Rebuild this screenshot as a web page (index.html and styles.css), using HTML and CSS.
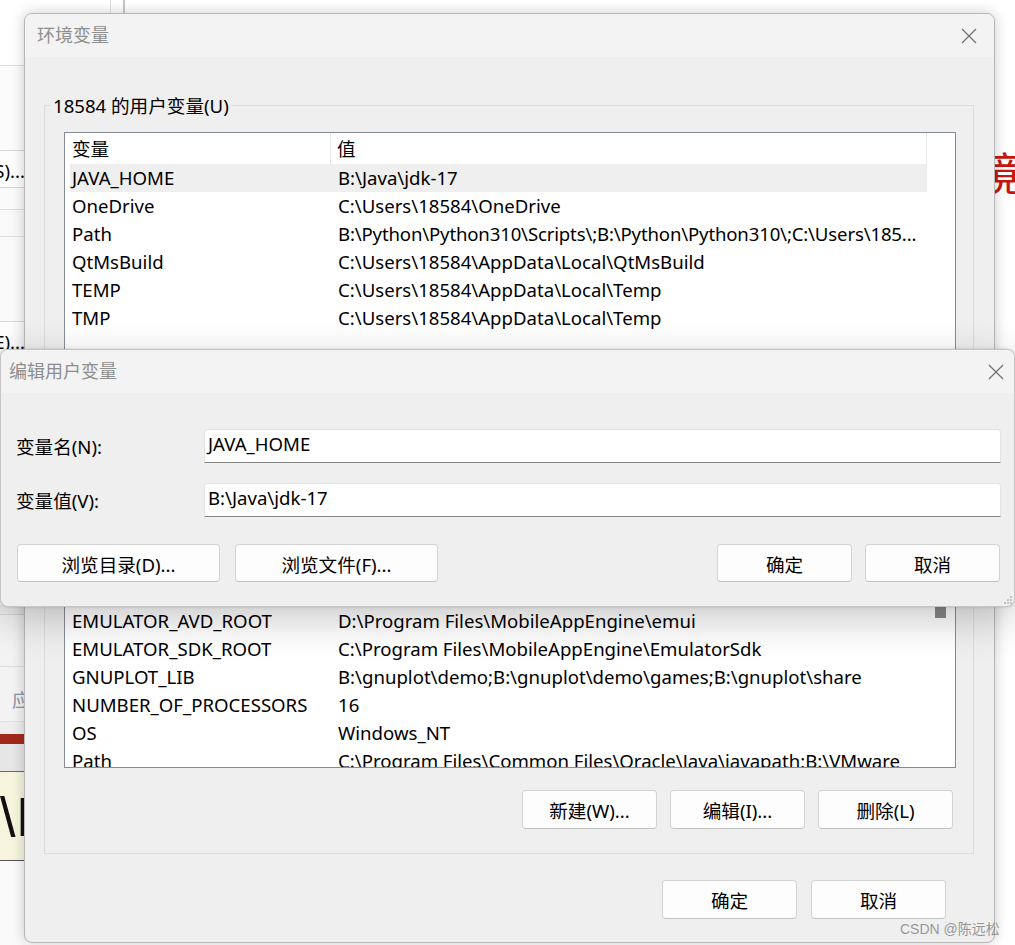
FILE: index.html
```html
<!DOCTYPE html>
<html lang="zh-CN">
<head>
<meta charset="utf-8">
<title>环境变量</title>
<link rel="stylesheet" href="styles.css">
</head>
<body>
<div class="desktop">
  <div class="bgwin">
    <div class="bg-top"></div>
    <div class="bg-a1"></div>
    <div class="bg-btn bg-b1">设置(S)...</div>
    <div class="bg-a2"></div>
    <div class="bg-strip"></div>
    <div class="bg-a3"></div>
    <div class="bg-btn bg-b2">设置(E)...</div>
    <div class="bg-hidden"></div>
    <div class="bg-a4"></div>
    <div class="bg-a5"></div>
    <div class="bg-apply">应用(A)</div>
    <div class="bg-gap"></div>
    <div class="bg-red"></div>
    <div class="bg-grey"></div>
    <div class="bg-note">\I</div>
    <div class="bg-bottom"></div>
  </div>
  <div class="bgedge"></div>
  <div class="article-char">境</div>

  <div class="win main">
    <div class="titlebar">
      <span class="title">环境变量</span>
      <svg class="close" width="16" height="16" viewBox="0 0 16 16"><path d="M1 1L15 15M15 1L1 15" stroke="#6f6f6f" stroke-width="1.2" fill="none"/></svg>
    </div>
    <div class="main-body">
      <div class="group g-user">
        <span class="legend">18584 的用户变量(U)</span>
        <div class="list list-user">
          <div class="list-main">
            <div class="list-head"><div class="hc hc-name">变量</div><div class="hc hc-val">值</div></div>
            <div class="rows">
              <div class="row sel"><span class="c-name">JAVA_HOME</span><span class="c-val">B:\Java\jdk-17</span></div>
              <div class="row"><span class="c-name">OneDrive</span><span class="c-val">C:\Users\18584\OneDrive</span></div>
              <div class="row"><span class="c-name">Path</span><span class="c-val tight">B:\Python\Python310\Scripts\;B:\Python\Python310\;C:\Users\185...</span></div>
              <div class="row"><span class="c-name">QtMsBuild</span><span class="c-val">C:\Users\18584\AppData\Local\QtMsBuild</span></div>
              <div class="row"><span class="c-name">TEMP</span><span class="c-val">C:\Users\18584\AppData\Local\Temp</span></div>
              <div class="row"><span class="c-name">TMP</span><span class="c-val">C:\Users\18584\AppData\Local\Temp</span></div>
            </div>
          </div>
          <div class="vscroll"></div>
        </div>
        <div class="btnrow covered">
          <button class="btn">新建(N)...</button>
          <button class="btn">编辑(E)...</button>
          <button class="btn">删除(D)</button>
        </div>
      </div>

      <div class="group g-sys">
        <span class="legend covered">系统变量(S)</span>
        <div class="list list-sys">
          <div class="list-main">
            <div class="list-head covered"><div class="hc hc-name">变量</div><div class="hc hc-val">值</div></div>
            <div class="rows">
              <div class="row covered"><span class="c-name">ComSpec</span><span class="c-val">C:\WINDOWS\system32\cmd.exe</span></div>
              <div class="row covered"><span class="c-name">DriverData</span><span class="c-val">C:\Windows\System32\Drivers\DriverData</span></div>
              <div class="row"><span class="c-name">EMULATOR_AVD_ROOT</span><span class="c-val">D:\Program Files\MobileAppEngine\emui</span></div>
              <div class="row"><span class="c-name">EMULATOR_SDK_ROOT</span><span class="c-val">C:\Program Files\MobileAppEngine\EmulatorSdk</span></div>
              <div class="row"><span class="c-name">GNUPLOT_LIB</span><span class="c-val">B:\gnuplot\demo;B:\gnuplot\demo\games;B:\gnuplot\share</span></div>
              <div class="row"><span class="c-name">NUMBER_OF_PROCESSORS</span><span class="c-val">16</span></div>
              <div class="row"><span class="c-name">OS</span><span class="c-val">Windows_NT</span></div>
              <div class="row"><span class="c-name">Path</span><span class="c-val">C:\Program Files\Common Files\Oracle\Java\javapath;B:\VMware</span></div>
            </div>
          </div>
          <div class="vscroll"><div class="thumb"></div></div>
        </div>
        <div class="btnrow">
          <button class="btn">新建(W)...</button>
          <button class="btn">编辑(I)...</button>
          <button class="btn">删除(L)</button>
        </div>
      </div>

      <div class="footer">
        <button class="btn">确定</button>
        <button class="btn">取消</button>
      </div>
    </div>
  </div>

  <div class="win edit">
    <div class="titlebar">
      <span class="title">编辑用户变量</span>
      <svg class="close" width="16" height="16" viewBox="0 0 16 16"><path d="M1 1L15 15M15 1L1 15" stroke="#6f6f6f" stroke-width="1.2" fill="none"/></svg>
    </div>
    <div class="edit-body">
      <div class="field">
        <label class="flabel">变量名(N):</label>
        <div class="input">JAVA_HOME</div>
      </div>
      <div class="field">
        <label class="flabel">变量值(V):</label>
        <div class="input">B:\Java\jdk-17</div>
      </div>
      <div class="edit-btns">
        <div class="btn-group">
          <button class="btn btn-wide">浏览目录(D)...</button>
          <button class="btn btn-wide">浏览文件(F)...</button>
        </div>
        <div class="btn-group">
          <button class="btn">确定</button>
          <button class="btn">取消</button>
        </div>
      </div>
    </div>
    <svg class="grip" width="10" height="10" viewBox="0 0 10 10"><g fill="#c4c4c4"><rect x="7" y="1" width="2" height="2"/><rect x="4" y="4" width="2" height="2"/><rect x="7" y="4" width="2" height="2"/><rect x="1" y="7" width="2" height="2"/><rect x="4" y="7" width="2" height="2"/><rect x="7" y="7" width="2" height="2"/></g></svg>
  </div>

  <div class="watermark">CSDN @陈远松</div>
</div>
</body>
</html>
```

FILE: styles.css
```css
* { box-sizing: border-box; }
html, body { margin: 0; padding: 0; }
body {
  width: 1015px;
  height: 945px;
  overflow: hidden;
  background: #ffffff;
  font-family: "Noto Sans", "Noto Sans CJK SC", sans-serif;
  font-size: 18.6px;
  color: #000;
}
.desktop { position: relative; width: 1015px; height: 945px; overflow: hidden; }
.covered { visibility: hidden; }

/* background window on the left */
.bgwin {
  position: absolute;
  left: 0; top: 0;
  width: 26px; height: 945px;
  display: flex; flex-direction: column;
  overflow: hidden;
  background: #fafafa;
}
.bg-top { height: 66px; background: #ffffff; border-bottom: 1px solid #dedede; flex: none; }
.bg-a1 { height: 84px; flex: none; background: #fbfbfb; }
.bg-btn {
  flex: none; height: 38px;
  border-top: 1px solid #d6d6d6; border-bottom: 1px solid #d6d6d6;
  display: flex; align-items: center; justify-content: flex-end;
  white-space: nowrap; padding-right: 1px; background: #fdfdfd;
}
.bg-a2 { height: 22px; flex: none; border-bottom: 1px solid #dedede; }
.bg-strip { height: 27px; flex: none; border-bottom: 1px solid #dedede; background: #f9f9f9; }
.bg-a3 { height: 84px; flex: none; }
.bg-b2 { height: 38px; }
.bg-hidden { height: 246px; flex: none; }
.bg-a4 { height: 10px; flex: none; background: #ededed; border-bottom: 1px solid #d8d8d8; }
.bg-a5 { height: 52px; flex: none; background: #f3f3f3; border-bottom: 1px solid #dcdcdc; }
.bg-apply {
  height: 55px; flex: none; background: #f3f3f3;
  color: #8a96a8; padding-left: 12px; padding-top: 21px; white-space: nowrap;
  border-bottom: 1px solid #e2e2e2; line-height: 24px;
}
.bg-gap { height: 12px; flex: none; background: #eeeeee; }
.bg-red { height: 10px; flex: none; background: #a3281c; }
.bg-grey { height: 28px; flex: none; background: #e6e6e6; border-bottom: 1px solid #6a6a6a; }
.bg-note {
  height: 89px; flex: none; background: #f7f5dd; border-bottom: 1px solid #555;
  font-family: "Liberation Sans", sans-serif; font-size: 56px; line-height: 89px;
  font-weight: 300; white-space: nowrap; color: #111; padding-left: 0;
}
.bg-bottom { flex: 1; background: #fafafa; }
.bgedge {
  position: absolute; left: 110px; top: 0; width: 15px; height: 16px;
  border-left: 1px solid #e2e2e2; border-right: 2px solid #c6c6c6;
}
.article-char {
  position: absolute; left: 976px; top: 148px;
  font-family: "Noto Sans CJK SC", sans-serif;
  font-size: 45px; line-height: 48px; color: #c8160e;
}

/* windows */
.win {
  position: absolute;
  background: #efefef;
  border-radius: 8px;
  overflow: hidden;
  display: flex; flex-direction: column;
}
.titlebar {
  flex: none; height: 43px; background: #f3f3f3;
  display: flex; align-items: center; justify-content: space-between;
}
.title { color: #8e8e8e; font-size: 18px; margin-bottom: 4px; }
.close { display: block; }

.main {
  left: 24px; top: 13px; width: 971px; height: 930px;
  border: 1px solid #b6b6b6;
  box-shadow: 0 0 14px rgba(0,0,0,0.20);
}
.main .titlebar { padding: 0 17px 0 12px; }
.main-body { flex: 1; padding: 48px 20px 0 19px; }

.group {
  position: relative;
  border: 1px solid #dcdcdc;
  padding: 26px 17px 24px 19px;
}
.legend {
  position: absolute; left: 6px; top: -12px;
  padding: 0 2px; line-height: 24px;
  background: #efefef; white-space: nowrap;
}
.g-sys { margin-top: 38px; }

.list {
  display: flex;
  border: 1px solid #868c96;
  background: #fff;
  overflow: hidden;
}
.list-user { height: 238px; }
.list-sys { height: 249px; }
.list-main { width: 862px; flex: none; display: flex; flex-direction: column; }
.list-head { height: 31px; display: flex; flex: none; border-right: 1px solid #e6e6e6; }
.hc { display: flex; align-items: center; white-space: nowrap; padding-bottom: 2px; }
.hc-name { width: 266px; padding-left: 7px; border-right: 1px solid #e6e6e6; }
.hc-val { flex: 1; padding-left: 6px; }
.rows { padding-left: 5px; }
.row { height: 28px; display: flex; align-items: center; white-space: nowrap; overflow: hidden; padding-bottom: 2px; }
.row.sel { background: #efefef; }
.c-name { width: 268px; padding-left: 2px; flex: none; }
.c-val { flex: 1; }
.c-val.tight { letter-spacing: -0.16px; }
.vscroll { flex: 1; }
.thumb { margin-top: 78px; margin-left: 8px; width: 11px; height: 20px; background: #898989; }

.btnrow {
  display: flex; justify-content: flex-end; gap: 13px;
  margin-top: 22px; padding-right: 3px;
}
.g-user .btnrow { margin-top: 20px; }

.btn {
  font: inherit; color: #000;
  width: 135px; height: 39px;
  background: #fdfdfd;
  border: 1px solid #d3d3d3;
  border-bottom-color: #c2c2c2;
  border-radius: 4px;
  padding: 0;
  display: flex; align-items: center; justify-content: center;
  white-space: nowrap;
}
.footer {
  display: flex; justify-content: flex-end; gap: 14px;
  margin-top: 26px; padding-right: 28px;
}

/* edit dialog */
.edit {
  left: 0; top: 349px; width: 1015px; height: 258px;
  border: 1px solid #c6c6c6;
  box-shadow: 0 12px 40px rgba(0,0,0,0.22), 0 0 3px rgba(0,0,0,0.18);
}
.edit .titlebar { padding: 0 10px 0 8px; }
.edit-body { flex: 1; padding: 36px 13px 0 15px; display: flex; flex-direction: column; }
.field { display: flex; align-items: center; height: 34px; }
.field + .field { margin-top: 20px; }
.flabel { width: 188px; flex: none; white-space: nowrap; padding-bottom: 2px; }
.input {
  flex: 1; height: 34px;
  background: #fff;
  border: 1px solid #e4e4e4;
  border-bottom: 1px solid #858585;
  border-radius: 3px 3px 0 0;
  padding: 0 3px; line-height: 28px;
  white-space: nowrap;
}
.edit-btns { display: flex; justify-content: space-between; margin-top: 27px; padding-left: 1px; padding-right: 1px; }
.btn-group { display: flex; gap: 13px; }
.btn-group:first-child { gap: 15px; }
.edit-btns .btn { height: 38px; }
.btn-wide { width: 203px; }
.grip { position: absolute; right: 1px; bottom: 1px; }

.watermark {
  position: absolute; left: 900px; top: 918px;
  font-family: "Liberation Sans", "Noto Sans CJK SC", sans-serif;
  font-size: 14px; color: rgba(120,120,120,0.75);
  white-space: nowrap;
}
```
